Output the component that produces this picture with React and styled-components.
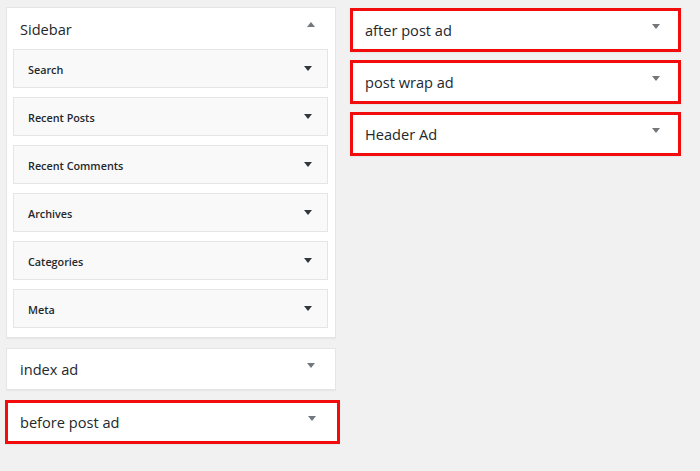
import React from "react";
import styled, { createGlobalStyle } from "styled-components";

const GlobalStyle = createGlobalStyle`
  body {
    margin: 0;
    background: #f1f1f1;
    font-family: "Open Sans", "Liberation Sans", sans-serif;
    color: #23282d;
  }
`;

const Page = styled.div`
  display: flex;
  align-items: flex-start;
  gap: 15px;
  padding: 7px 0 0 6px;
  min-height: 464px;
`;

const Column = styled.div`
  display: flex;
  flex-direction: column;
  gap: ${(p) => p.$gap}px;
  width: ${(p) => p.$width}px;
  margin-top: ${(p) => p.$offset || 0}px;
`;

const Widget = styled.div`
  background: #fff;
  border: ${(p) => (p.$highlight ? "3px solid #f20c0c" : "1px solid #e5e5e5")};
  margin: ${(p) => (p.$highlight ? "0 -4px 0 -1px" : "0")};
  box-shadow: 0 1px 1px rgba(0, 0, 0, 0.04);
`;

const WidgetTop = styled.div`
  display: flex;
  align-items: center;
  justify-content: space-between;
  height: ${(p) => p.$height}px;
  padding: 0 ${(p) => p.$padRight}px 0 ${(p) => p.$padLeft}px;
`;

const Title = styled.h3`
  margin: 0;
  font-size: 14.6px;
  font-weight: 400;
  line-height: 20px;
`;

const Arrow = styled.span`
  align-self: ${(p) => (p.$center ? "center" : "flex-start")};
  margin-top: ${(p) => (p.$center ? 0 : p.$top || 14)}px;
  width: 0;
  height: 0;
  border-left: 4px solid transparent;
  border-right: 4px solid transparent;
  ${(p) =>
    p.$up
      ? `border-bottom: 5px solid ${p.$color};`
      : `border-top: 5px solid ${p.$color};`}
`;

const Inside = styled.div`
  display: flex;
  flex-direction: column;
  gap: 9px;
  padding: 0 7px 9px 6px;
`;

const Item = styled.div`
  display: flex;
  align-items: center;
  justify-content: space-between;
  height: 37px;
  padding: 0 15px 0 14px;
  background: #f9f9f9;
  border: 1px solid #e5e5e5;
`;

const ItemTitle = styled.span`
  font-size: 10.8px;
  font-weight: 600;
  padding-top: 1px;
`;

const items = ["Search", "Recent Posts", "Recent Comments", "Archives", "Categories", "Meta"];

const AdWidget = ({ title, highlight, arrowGap = 20 }) => (
  <Widget $highlight={highlight}>
    <WidgetTop
      $height={highlight ? 38 : 40}
      $padLeft={highlight ? 12 : 13}
      $padRight={arrowGap}
    >
      <Title>{title}</Title>
      <Arrow $color="#72777c" $top={highlight ? 13 : 14} />
    </WidgetTop>
  </Widget>
);

const App = () => (
  <>
    <GlobalStyle />
    <Page>
      <Column $width={330} $gap={10}>
        <Widget>
          <WidgetTop $height={41} $padLeft={13} $padRight={20}>
            <Title>Sidebar</Title>
            <Arrow $up $color="#72777c" $top={14} />
          </WidgetTop>
          <Inside>
            {items.map((name) => (
              <Item key={name}>
                <ItemTitle>{name}</ItemTitle>
                <Arrow $center $color="#32373c" />
              </Item>
            ))}
          </Inside>
        </Widget>
        <AdWidget title="index ad" />
        <AdWidget title="before post ad" highlight arrowGap={21} />
      </Column>
      <Column $width={326} $gap={8} $offset={1}>
        <AdWidget title="after post ad" highlight arrowGap={18} />
        <AdWidget title="post wrap ad" highlight arrowGap={18} />
        <AdWidget title="Header Ad" highlight arrowGap={18} />
      </Column>
    </Page>
  </>
);

export default App;
